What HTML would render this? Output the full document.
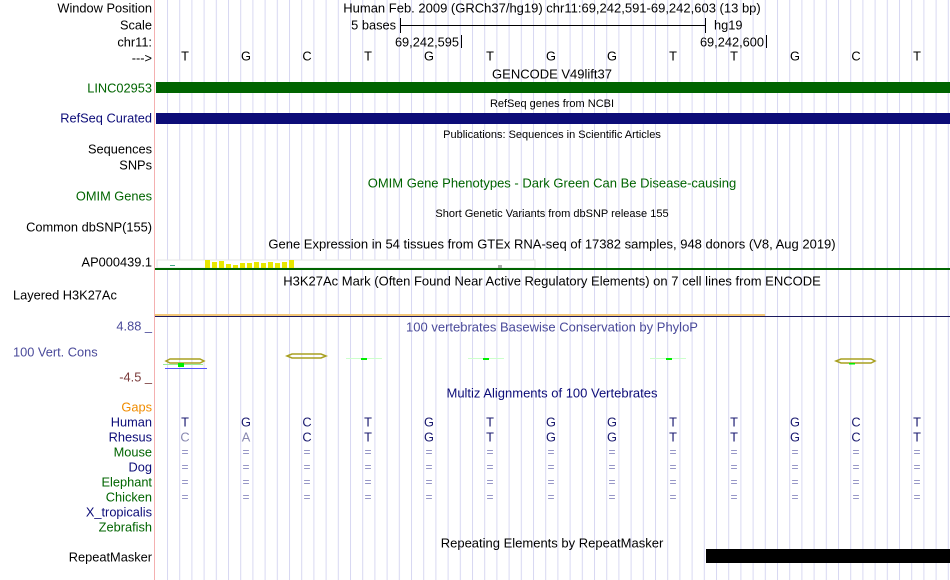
<!DOCTYPE html>
<html><head><meta charset="utf-8"><style>
body{margin:0;background:#fff}
svg{display:block;font-family:"Liberation Sans",Arial,sans-serif}
</style></head><body>
<svg width="950" height="580" viewBox="0 0 950 580" xmlns="http://www.w3.org/2000/svg">
<defs>
<pattern id="g" x="167" y="0" width="12.2" height="580" patternUnits="userSpaceOnUse">
<rect x="0" y="0" width="1" height="580" fill="#d8d8f2"/>
</pattern>
</defs>
<rect width="950" height="580" fill="#fff"/>
<rect x="160" y="0" width="790" height="580" fill="url(#g)"/>
<rect x="154" y="0" width="1" height="580" fill="#f4b0b0"/>

<g font-size="12.8" text-anchor="end" dominant-baseline="central">
<text x="152" y="8">Window Position</text>
<text x="152" y="25">Scale</text>
<text x="152" y="42">chr11:</text>
<text x="152" y="58">---&gt;</text>
<text x="152" y="88" fill="#006400">LINC02953</text>
<text x="152" y="118" fill="#0c0c78">RefSeq Curated</text>
<text x="152" y="149">Sequences</text>
<text x="152" y="165">SNPs</text>
<text x="152" y="196" fill="#006400">OMIM Genes</text>
<text x="152" y="227">Common dbSNP(155)</text>
<text x="152" y="262">AP000439.1</text>
<text x="152" y="326" fill="#4a4a9a">4.88 _</text>
<text x="152" y="377" fill="#7a3a3a">-4.5 _</text>
<text x="152" y="407" fill="#f08c00">Gaps</text>
<text x="152" y="422" fill="#0c0c78">Human</text>
<text x="152" y="437" fill="#0c0c78">Rhesus</text>
<text x="152" y="452" fill="#006400">Mouse</text>
<text x="152" y="467" fill="#0c0c78">Dog</text>
<text x="152" y="482" fill="#006400">Elephant</text>
<text x="152" y="497" fill="#006400">Chicken</text>
<text x="152" y="512" fill="#0c0c78">X_tropicalis</text>
<text x="152" y="527" fill="#006400">Zebrafish</text>
<text x="152" y="557">RepeatMasker</text>
</g>
<g font-size="12.8" dominant-baseline="central">
<text x="13" y="295">Layered H3K27Ac</text>
<text x="13" y="352" fill="#4a4a9a">100 Vert. Cons</text>
</g>

<g font-size="13" text-anchor="middle" dominant-baseline="central">
<text x="552" y="8">Human Feb. 2009 (GRCh37/hg19)   chr11:69,242,591-69,242,603 (13 bp)</text>
<text x="552" y="74">GENCODE V49lift37</text>
<text x="552" y="183" fill="#006400">OMIM Gene Phenotypes - Dark Green Can Be Disease-causing</text>
<text x="552" y="244">Gene Expression in 54 tissues from GTEx RNA-seq of 17382 samples, 948 donors (V8, Aug 2019)</text>
<text x="552" y="281">H3K27Ac Mark (Often Found Near Active Regulatory Elements) on 7 cell lines from ENCODE</text>
<text x="552" y="327" fill="#4a4a9a">100 vertebrates Basewise Conservation by PhyloP</text>
<text x="552" y="393" fill="#0c0c78">Multiz Alignments of 100 Vertebrates</text>
<text x="552" y="543">Repeating Elements by RepeatMasker</text>
</g>
<g font-size="11" text-anchor="middle" dominant-baseline="central">
<text x="552" y="104">RefSeq genes from NCBI</text>
<text x="552" y="135">Publications: Sequences in Scientific Articles</text>
<text x="552" y="214">Short Genetic Variants from dbSNP release 155</text>
</g>

<!-- scale -->
<g font-size="12.8" dominant-baseline="central">
<text x="396" y="25" text-anchor="end">5 bases</text>
<text x="714" y="25">hg19</text>
<text x="459" y="42" text-anchor="end">69,242,595</text>
<text x="764" y="42" text-anchor="end">69,242,600</text>
</g>
<rect x="400" y="25" width="306" height="1" fill="#000"/>
<rect x="400" y="18" width="1" height="15" fill="#000"/>
<rect x="705" y="18" width="1" height="15" fill="#000"/>
<rect x="461" y="35" width="1" height="13" fill="#000"/>
<rect x="766" y="35" width="1" height="13" fill="#000"/>

<g font-size="12.8" text-anchor="middle" dominant-baseline="central">
<text x="185" y="56">T</text><text x="246" y="56">G</text><text x="307" y="56">C</text><text x="368" y="56">T</text><text x="429" y="56">G</text><text x="490" y="56">T</text><text x="551" y="56">G</text><text x="612" y="56">G</text><text x="673" y="56">T</text><text x="734" y="56">T</text><text x="795" y="56">G</text><text x="856" y="56">C</text><text x="917" y="56">T</text>
</g>

<rect x="156" y="82" width="794" height="11" fill="#006400"/>
<rect x="156" y="113" width="794" height="11" fill="#0c0c78"/>

<!-- GTEx -->
<rect x="157" y="260" width="378" height="8" fill="#fff" stroke="#e4e4e4" stroke-width="1"/>
<rect x="170" y="265" width="5" height="1" fill="#4a8"/>
<g fill="#e8e800">
<rect x="205" y="260" width="5" height="8"/><rect x="212" y="262" width="5" height="6"/><rect x="219" y="261" width="5" height="7"/><rect x="226" y="264" width="5" height="4"/><rect x="233" y="265" width="5" height="3"/><rect x="240" y="263" width="5" height="5"/><rect x="247" y="263" width="5" height="5"/><rect x="254" y="262" width="5" height="6"/><rect x="261" y="263" width="5" height="5"/><rect x="268" y="262" width="5" height="6"/><rect x="275" y="263" width="5" height="5"/><rect x="282" y="262" width="5" height="6"/><rect x="289" y="260" width="5" height="8"/>
</g>
<rect x="498" y="265" width="4" height="3" fill="#aaa"/>
<rect x="155" y="268" width="795" height="2" fill="#006400"/>

<rect x="155" y="314" width="610" height="2" fill="#f4c878"/>
<rect x="155" y="316" width="795" height="1" fill="#1a1a60"/>

<!-- phylop -->
<g fill="none" stroke="#a8a020" stroke-width="1.5">
<path d="M166 361 L170 359 L200 359 L204 361 L200 363 L170 363 Z"/>
<path d="M287 356 L292 354 L321 354 L326 356 L321 358 L292 358 Z"/>
<path d="M836 361 L841 359 L871 359 L875 361 L871 363 L841 363 Z"/>
</g>
<rect x="163" y="364" width="40" height="1" fill="#9e9"/>
<rect x="165" y="368" width="42" height="1" fill="#55f"/>
<rect x="178" y="363" width="6" height="4" fill="#0e0"/>
<rect x="346" y="358" width="36" height="1" fill="#cfc"/><rect x="361" y="358" width="6" height="2" fill="#0e0"/>
<rect x="468" y="358" width="36" height="1" fill="#cfc"/><rect x="483" y="358" width="6" height="2" fill="#0e0"/>
<rect x="650" y="358" width="36" height="1" fill="#cfc"/><rect x="666" y="358" width="6" height="2" fill="#0e0"/>
<rect x="849" y="363" width="6" height="1.5" fill="#0e0"/>

<!-- multiz -->
<g font-size="12.8" text-anchor="middle" dominant-baseline="central" fill="#1a1a70">
<text x="185" y="422">T</text><text x="246" y="422">G</text><text x="307" y="422">C</text><text x="368" y="422">T</text><text x="429" y="422">G</text><text x="490" y="422">T</text><text x="551" y="422">G</text><text x="612" y="422">G</text><text x="673" y="422">T</text><text x="734" y="422">T</text><text x="795" y="422">G</text><text x="856" y="422">C</text><text x="917" y="422">T</text>
<text x="185" y="437" fill="#8888b0">C</text><text x="246" y="437" fill="#8888b0">A</text><text x="307" y="437">C</text><text x="368" y="437">T</text><text x="429" y="437">G</text><text x="490" y="437">T</text><text x="551" y="437">G</text><text x="612" y="437">G</text><text x="673" y="437">T</text><text x="734" y="437">T</text><text x="795" y="437">G</text><text x="856" y="437">C</text><text x="917" y="437">T</text>
</g>
<g font-size="12" text-anchor="middle" dominant-baseline="central" fill="#8888c0">
<text x="185" y="452">=</text><text x="246" y="452">=</text><text x="307" y="452">=</text><text x="368" y="452">=</text><text x="429" y="452">=</text><text x="490" y="452">=</text><text x="551" y="452">=</text><text x="612" y="452">=</text><text x="673" y="452">=</text><text x="734" y="452">=</text><text x="795" y="452">=</text><text x="856" y="452">=</text><text x="917" y="452">=</text>
<text x="185" y="467">=</text><text x="246" y="467">=</text><text x="307" y="467">=</text><text x="368" y="467">=</text><text x="429" y="467">=</text><text x="490" y="467">=</text><text x="551" y="467">=</text><text x="612" y="467">=</text><text x="673" y="467">=</text><text x="734" y="467">=</text><text x="795" y="467">=</text><text x="856" y="467">=</text><text x="917" y="467">=</text>
<text x="185" y="482">=</text><text x="246" y="482">=</text><text x="307" y="482">=</text><text x="368" y="482">=</text><text x="429" y="482">=</text><text x="490" y="482">=</text><text x="551" y="482">=</text><text x="612" y="482">=</text><text x="673" y="482">=</text><text x="734" y="482">=</text><text x="795" y="482">=</text><text x="856" y="482">=</text><text x="917" y="482">=</text>
<text x="185" y="497">=</text><text x="246" y="497">=</text><text x="307" y="497">=</text><text x="368" y="497">=</text><text x="429" y="497">=</text><text x="490" y="497">=</text><text x="551" y="497">=</text><text x="612" y="497">=</text><text x="673" y="497">=</text><text x="734" y="497">=</text><text x="795" y="497">=</text><text x="856" y="497">=</text><text x="917" y="497">=</text>
</g>

<rect x="706" y="549" width="244" height="14" fill="#000"/>
</svg>
</body></html>
